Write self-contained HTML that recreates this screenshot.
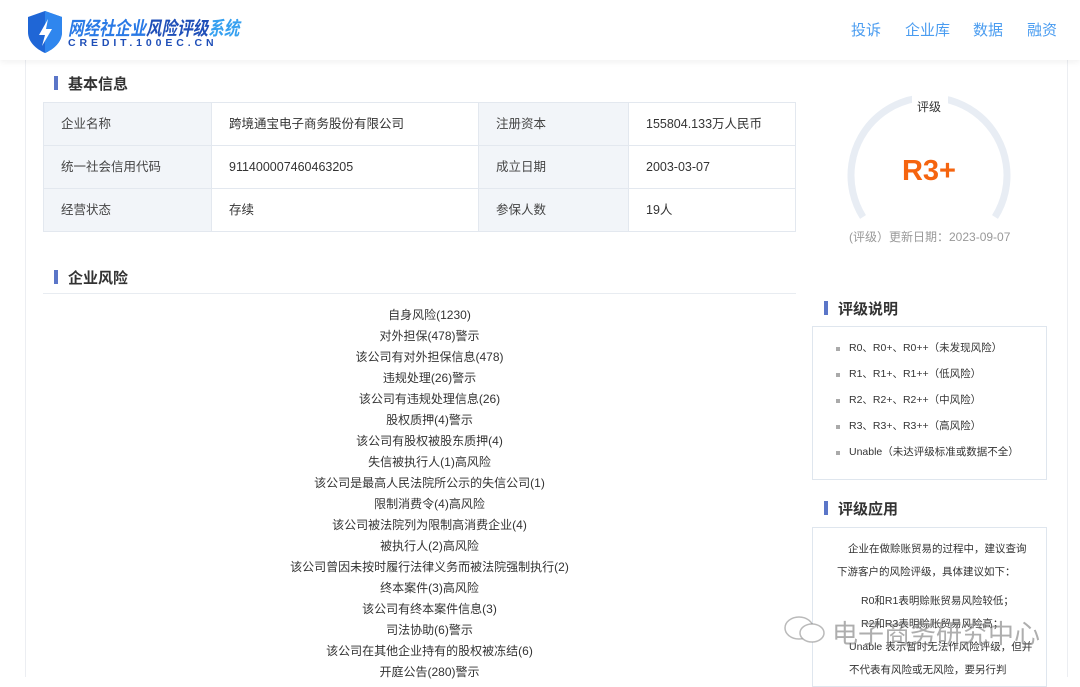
<!DOCTYPE html>
<html><head><meta charset="utf-8"><style>
*{margin:0;padding:0;box-sizing:border-box}
body{width:1080px;height:677px;overflow:hidden;background:#fff;font-family:"Liberation Sans","Noto Sans CJK SC",sans-serif;color:#333;position:relative}
.hdr{position:absolute;left:0;top:0;width:1080px;height:60px;background:#fff;box-shadow:0 2px 6px rgba(0,0,0,.06);z-index:2}
.main{position:absolute;left:25px;top:60px;width:1043px;height:617px;background:#fff;border-left:1px solid #eceef2;border-right:1px solid #eceef2}
.nav{position:absolute;top:19px;font-size:15px;color:#4a9cf0}
.ttl{position:absolute;font-size:15px;font-weight:bold;color:#333}
.ttl:before{content:"";position:absolute;left:-14px;top:3px;width:4px;height:14px;background:#5b76c8}
table{position:absolute;left:43px;top:102px;width:753px;border-collapse:collapse;font-size:12.5px}
td{border:1px solid #e3e8ef;height:43px;padding:0 0 0 17px;vertical-align:middle;line-height:16px}
td.k{background:#f2f5f9;color:#444}
.risk{position:absolute;left:53px;top:305px;width:753px;text-align:center;font-size:12px;line-height:21px;color:#333}
.box{position:absolute;border:1px solid #dfe6ee;background:#fff;font-size:10.5px;color:#333}
.box li{list-style:none;position:relative;padding-left:36px;height:26px;line-height:26px}
.box li:before{content:"";position:absolute;left:23px;top:12px;width:4px;height:4px;background:#aaa}
</style></head><body>
<div class="hdr">
<svg style="position:absolute;left:26px;top:10px" width="38" height="44" viewBox="0 0 38 44"><path d="M19 1 L36 7 L36 22 C36 32 28 39 19 43 C10 39 2 32 2 22 L2 7 Z" fill="#1f66d6"/><path d="M19 1 L36 7 L36 22 C36 32 28 39 19 43 Z" fill="#2f86ee"/><path d="M22 9 L13 25 L19 25 L16 36 L26 19 L20 19 Z" fill="#fff"/></svg>
<div style="position:absolute;left:68px;top:14px;font-size:19px;font-weight:bold;font-style:italic;color:#2a7ae6;white-space:nowrap;transform:scaleX(0.82);transform-origin:left top">网经社企业<span style="color:#1f4fb8">风险评级</span><span style="color:#35a0f0">系统</span></div>
<div style="position:absolute;left:68px;top:37px;font-size:10.5px;font-weight:bold;color:#1f4fb8;letter-spacing:3.9px">CREDIT.100EC.CN</div>
<span class="nav" style="left:851px">投诉</span><span class="nav" style="left:905px">企业库</span><span class="nav" style="left:973px">数据</span><span class="nav" style="left:1027px">融资</span>
</div>
<div class="main"></div>
<div class="ttl" style="left:68px;top:73px">基本信息</div>
<table>
<tr><td class="k" style="width:168px">企业名称</td><td style="width:267px">跨境通宝电子商务股份有限公司</td><td class="k" style="width:150px">注册资本</td><td>155804.133万人民币</td></tr>
<tr><td class="k">统一社会信用代码</td><td>911400007460463205</td><td class="k">成立日期</td><td>2003-03-07</td></tr>
<tr><td class="k">经营状态</td><td>存续</td><td class="k">参保人数</td><td>19人</td></tr>
</table>
<div class="ttl" style="left:68px;top:267px">企业风险</div>
<div style="position:absolute;left:43px;top:293px;width:753px;height:1px;background:#e8ecf1"></div>
<div class="risk">自身风险(1230)<br>对外担保(478)警示<br>该公司有对外担保信息(478)<br>违规处理(26)警示<br>该公司有违规处理信息(26)<br>股权质押(4)警示<br>该公司有股权被股东质押(4)<br>失信被执行人(1)高风险<br>该公司是最高人民法院所公示的失信公司(1)<br>限制消费令(4)高风险<br>该公司被法院列为限制高消费企业(4)<br>被执行人(2)高风险<br>该公司曾因未按时履行法律义务而被法院强制执行(2)<br>终本案件(3)高风险<br>该公司有终本案件信息(3)<br>司法协助(6)警示<br>该公司在其他企业持有的股权被冻结(6)<br>开庭公告(280)警示</div>
<svg style="position:absolute;left:840px;top:90px" width="180" height="135"><path d="M23 127 A78 78 0 1 1 155 127" fill="none" stroke="#e8edf4" stroke-width="7"/><rect x="72" y="2" width="36" height="16" fill="#fff"/></svg>
<div style="position:absolute;left:917px;top:98px;font-size:12px;color:#333">评级</div>
<div style="position:absolute;left:860px;top:155px;width:138px;text-align:center;font-size:29px;font-weight:bold;color:#f5640f">R3+</div>
<div style="position:absolute;left:849px;top:228px;font-size:12px;color:#999">(评级）更新日期：2023-09-07</div>
<div class="ttl" style="left:838px;top:298px">评级说明</div>
<div class="box" style="left:812px;top:326px;width:235px;height:154px;padding-top:8px"><ul>
<li>R0、R0+、R0++（未发现风险）</li><li>R1、R1+、R1++（低风险）</li><li>R2、R2+、R2++（中风险）</li><li>R3、R3+、R3++（高风险）</li><li>Unable（未达评级标准或数据不全）</li></ul></div>
<div class="ttl" style="left:838px;top:498px">评级应用</div>
<div class="box" style="left:812px;top:527px;width:235px;height:160px;line-height:23px;padding:10px 10px 0 24px">
<div style="text-indent:11px">企业在做赊账贸易的过程中，建议查询下游客户的风险评级，具体建议如下：</div>
<div style="margin-top:6px;padding-left:24px;position:relative">R0和R1表明赊账贸易风险较低；</div>
<div style="padding-left:24px">R2和R3表明赊账贸易风险高；</div>
<div style="padding-left:12px">Unable 表示暂时无法作风险评级，但并不代表有风险或无风险，要另行判</div>
</div>
<svg style="position:absolute;left:782px;top:614px" width="46" height="30"><ellipse cx="17" cy="14" rx="14" ry="11" fill="none" stroke="rgba(140,140,140,.6)" stroke-width="1.5"/><ellipse cx="30" cy="19" rx="12" ry="9" fill="#fff" stroke="rgba(140,140,140,.6)" stroke-width="1.5"/></svg>
<div style="position:absolute;left:832px;top:614px;font-size:26px;color:rgba(120,120,120,.6);white-space:nowrap">电子商务研究中心</div>
</body></html>
